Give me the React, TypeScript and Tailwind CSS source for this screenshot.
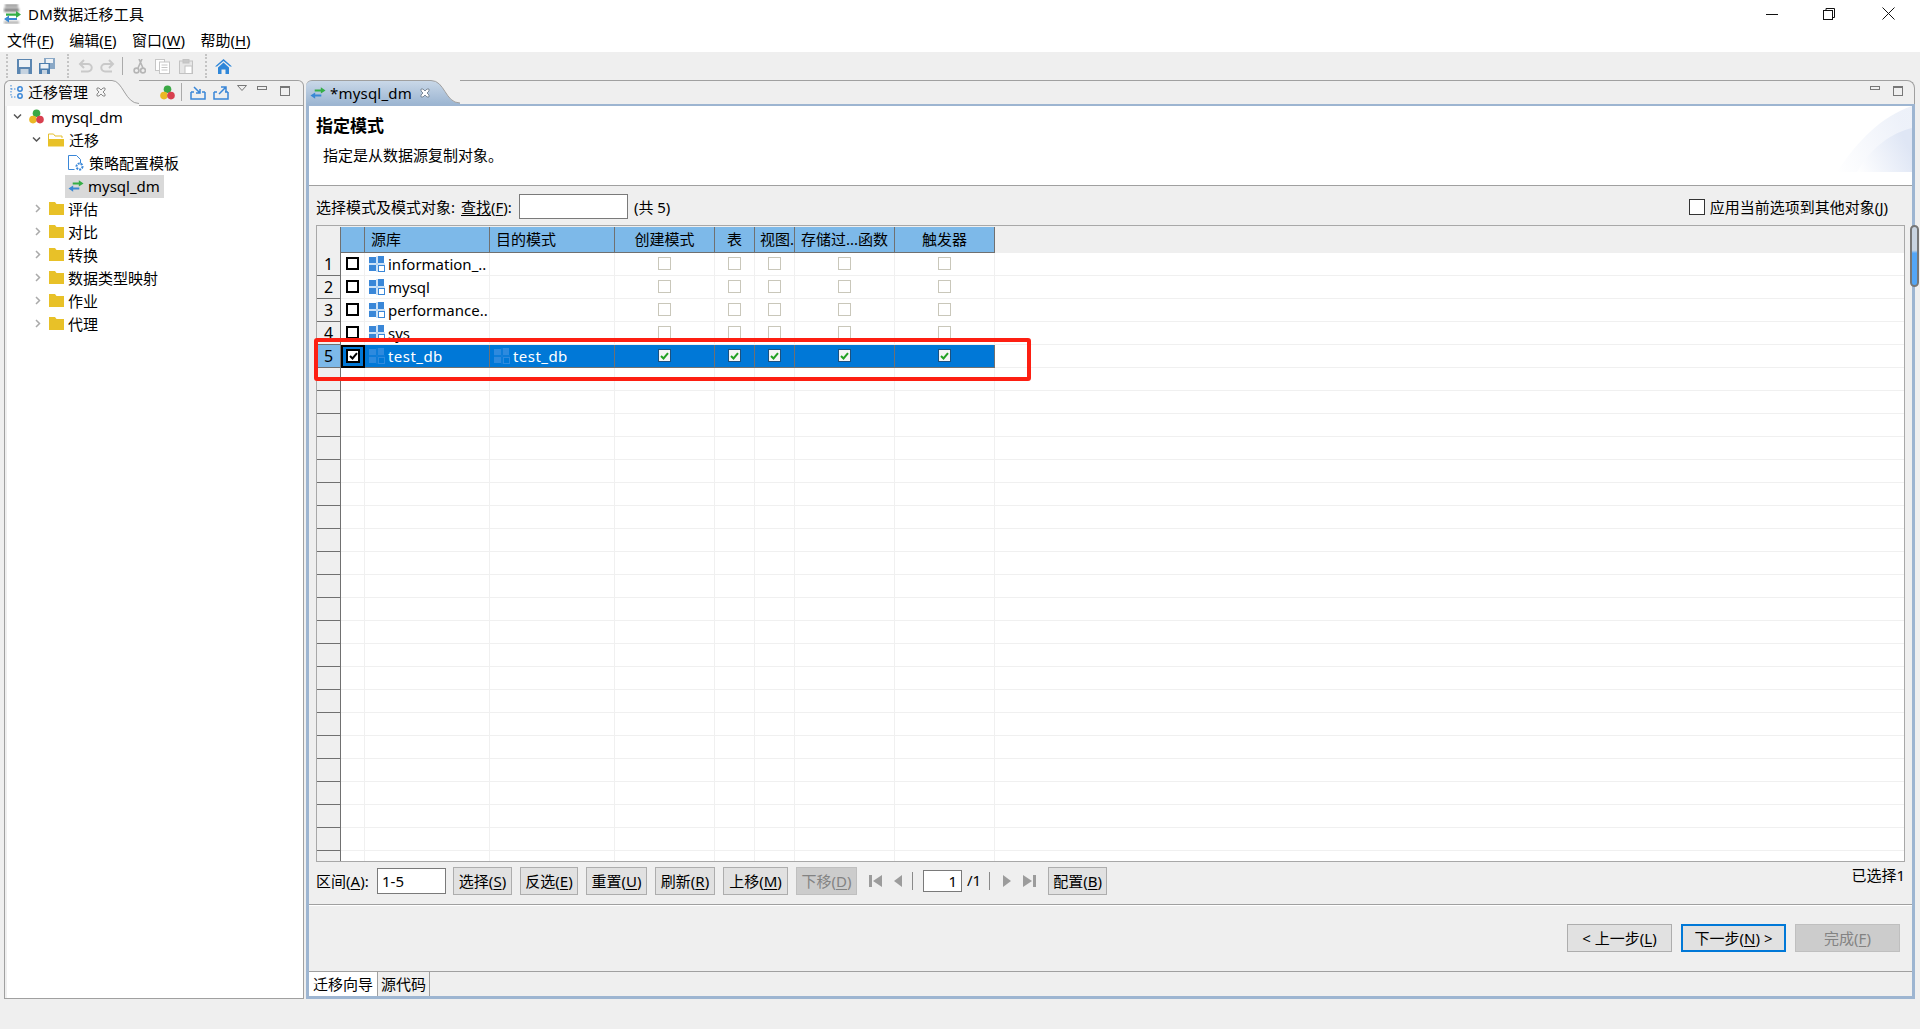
import type { ReactNode } from "react";

const rowCols = [
  "w-[24px]",
  "w-[125px]",
  "w-[125px]",
  "w-[100px]",
  "w-[40px]",
  "w-[40px]",
  "w-[100px]",
  "w-[100px]",
];

const headers = ["", "源库", "目的模式", "创建模式", "表", "视图.", "存储过...函数", "触发器"];
const schemas = ["information_..", "mysql", "performance..", "sys", "test_db"];

function Swap({ className = "" }: { className?: string }) {
  return (
    <svg viewBox="0 0 17 12" className={className}>
      <path d="M5 2.2h6.5V0l5 3.3-5 3.2V4.4H5z" fill="#35ae47" />
      <path d="M12 7.6H5.5V5.5l-5 3.2 5 3.3V9.8H12z" fill="#3a88d4" />
    </svg>
  );
}

function TriColor({ className = "" }: { className?: string }) {
  return (
    <svg viewBox="0 0 15 15" className={className}>
      <circle cx="7.5" cy="4.2" r="3.8" fill="#3aa845" />
      <circle cx="4" cy="10.6" r="3.8" fill="#eab825" />
      <circle cx="11" cy="10.6" r="3.8" fill="#d8404f" />
    </svg>
  );
}

function Folder({ open = false }: { open?: boolean }) {
  if (open) {
    return (
      <svg viewBox="0 0 16 14" className="h-[14px] w-[16px] shrink-0">
        <path d="M.5 13V1h5l1.5 2h7v2" fill="#fff" stroke="#e5bf2e" />
        <path d="M0 13.5V6h16v7.5z" fill="#e8c128" />
      </svg>
    );
  }
  return (
    <svg viewBox="0 0 15 13" className="h-[13px] w-[15px] shrink-0">
      <path d="M0 0h6l1.5 2H15v11H0z" fill="#e8c128" />
    </svg>
  );
}

function Chevron({ open }: { open: boolean }) {
  return (
    <svg viewBox="0 0 9 9" className="h-[9px] w-[9px] shrink-0" fill="none" strokeWidth="1.5">
      {open ? <path d="M1 2.5l3.5 3.5L8 2.5" stroke="#555" /> : <path d="M3 1l3.5 3.5L3 8" stroke="#aaa" />}
    </svg>
  );
}

function SchemaIcon({ faded = false }: { faded?: boolean }) {
  const c = faded ? "#2e8ade" : "#3a87d8";
  const line = faded ? "#1a80da" : "#9cc6ef";
  return (
    <svg viewBox="0 0 16 16" className="h-[16px] w-[16px] shrink-0">
      <rect x="0" y="1" width="7" height="6" fill={c} />
      <rect x="9" y="0" width="6" height="7" fill={c} />
      <rect x="0" y="9" width="7" height="6" fill={c} />
      <rect x="9.5" y="9.5" width="6" height="6" fill="none" stroke={c} />
      <path d="M8 0v16M0 8h16" stroke={line} />
    </svg>
  );
}

function DisabledBox() {
  return <div className="h-[13px] w-[13px] border border-[#c9c7ba] bg-white" />;
}

function CheckedBox() {
  return (
    <div className="flex h-[13px] w-[13px] items-center justify-center border border-[#1c5180] bg-[#f4f4f4]">
      <svg viewBox="0 0 9 8" className="h-[8px] w-[9px]">
        <path d="M1 4l2.5 2.5L8 1.2" fill="none" stroke="#21a121" strokeWidth="2" />
      </svg>
    </div>
  );
}

function Key({ text, k, after = "" }: { text: string; k: string; after?: string }) {
  return (
    <span>
      {text}(<span className="underline underline-offset-2">{k}</span>){after}
    </span>
  );
}

function Btn({ className = "", children, disabled = false }: { className?: string; children: ReactNode; disabled?: boolean }) {
  return (
    <div
      className={
        "flex h-[28px] shrink-0 items-center justify-center border " +
        (disabled ? "border-[#bfbfbf] bg-[#cccccc] text-[#838383] " : "border-[#adadad] bg-[#e1e1e1] ") +
        className
      }
    >
      {children}
    </div>
  );
}

function Grip() {
  return <div className="h-[24px] w-[2px] shrink-0 border-l-2 border-dotted border-[#c4c4c4]" />;
}

function ToolbarRow() {
  return (
    <div className="flex h-[28px] items-center pl-[6px]">
      <Grip />
      <svg viewBox="0 0 15 15" className="ml-[9px] h-[15px] w-[15px]">
        <rect width="15" height="15" fill="#5b86b1" />
        <rect x="2" y="1" width="11" height="7" fill="#eef2f6" />
        <rect x="3.5" y="10" width="8" height="5" fill="#c6d3e0" />
      </svg>
      <svg viewBox="0 0 16 16" className="ml-[7px] h-[16px] w-[16px]">
        <rect x="5" width="11" height="11" fill="#8aa8c6" />
        <rect x="7" y="1" width="7" height="4" fill="#eef2f6" />
        <rect y="5" width="11" height="11" fill="#4f7fae" />
        <rect x="1.5" y="6" width="8" height="4.5" fill="#eef2f6" />
        <rect x="3" y="12" width="5" height="4" fill="#c6d3e0" />
      </svg>
      <div className="ml-[12px]"><Grip /></div>
      <svg viewBox="0 0 15 14" className="ml-[9px] h-[14px] w-[15px]" fill="none" stroke="#c9c9c9" strokeWidth="2">
        <path d="M6 1L2 5l4 4M2 5h8a3.5 3.5 0 0 1 0 7.5H3" />
      </svg>
      <svg viewBox="0 0 15 14" className="ml-[7px] h-[14px] w-[15px]" fill="none" stroke="#c9c9c9" strokeWidth="2">
        <path d="M9 1l4 4-4 4M13 5H5a3.5 3.5 0 0 0 0 7.5h7" />
      </svg>
      <div className="ml-[7px] h-[18px] w-px bg-[#aaaaaa]" />
      <svg viewBox="0 0 13 15" className="ml-[10px] h-[15px] w-[13px]" fill="none" stroke="#b5b5b5" strokeWidth="1.6">
        <path d="M9 0L5 9M6 0l4 9" />
        <circle cx="3.5" cy="11.5" r="2.4" />
        <circle cx="10" cy="11.5" r="2.4" />
      </svg>
      <svg viewBox="0 0 15 15" className="ml-[9px] h-[15px] w-[15px]" fill="#fff" stroke="#c6c6c6">
        <rect x=".5" y=".5" width="9" height="11" />
        <rect x="4.5" y="3" width="10" height="11.5" />
        <path d="M6.5 6h6M6.5 8.5h6M6.5 11h6" />
      </svg>
      <svg viewBox="0 0 14 15" className="ml-[9px] h-[15px] w-[14px]" fill="#e6e6e6" stroke="#c2c2c2">
        <rect x=".5" y="2" width="13" height="12.5" />
        <rect x="4" y=".5" width="6" height="3.5" fill="#c8c8c8" />
        <rect x="6" y="7" width="7" height="7.5" fill="#fff" />
      </svg>
      <div className="ml-[12px]"><Grip /></div>
      <svg viewBox="0 0 17 15" className="ml-[8px] h-[15px] w-[17px]" fill="#2f87d9">
        <path d="M8.5 0L17 7.5h-2L8.5 2 2 7.5H0z" />
        <path d="M3 8.5l5.5-5 5.5 5V15h-3.5v-4.5h-4V15H3z" />
      </svg>
    </div>
  );
}

function TreeRow({ pad, chevron, icon, children, gap, selected = false }: { pad: string; chevron?: ReactNode; icon: ReactNode; children: ReactNode; gap: string; selected?: boolean }) {
  return (
    <div className={"flex h-[23px] items-center " + pad}>
      {chevron}
      <div className={"flex h-[23px] items-center pb-[2px] " + gap + (selected ? " bg-[#d9d9d9] pl-[3px] pr-[4px]" : "")}>
        {icon}
        <span>{children}</span>
      </div>
    </div>
  );
}

function Tree() {
  const closed = ["评估", "对比", "转换", "数据类型映射", "作业", "代理"];
  return (
    <div className="flex-1 bg-white">
      <TreeRow pad="pl-[6px]" gap="gap-[7px]" chevron={<div className="mr-[7px] pb-[2px]"><Chevron open /></div>} icon={<TriColor className="h-[15px] w-[15px] shrink-0" />}>
        mysql_dm
      </TreeRow>
      <TreeRow pad="pl-[25px]" gap="gap-[5px]" chevron={<div className="mr-[7px] pb-[2px]"><Chevron open /></div>} icon={<Folder open />}>
        迁移
      </TreeRow>
      <TreeRow
        pad="pl-[61px]"
        gap="gap-[5px]"
        icon={
          <svg viewBox="0 0 16 16" className="h-[16px] w-[16px] shrink-0">
            <path d="M.5.5h8l4 4v4M.5.5v14h6" fill="none" stroke="#3a87d8" />
            <circle cx="11.5" cy="11.5" r="3" fill="none" stroke="#3a87d8" strokeWidth="2" strokeDasharray="2 1" />
          </svg>
        }
      >
        策略配置模板
      </TreeRow>
      <TreeRow pad="pl-[58px]" gap="gap-[4px]" selected icon={<Swap className="h-[12px] w-[16px] shrink-0" />}>
        mysql_dm
      </TreeRow>
      {closed.map((t) => (
        <TreeRow key={t} pad="pl-[26px]" gap="gap-[4px]" chevron={<div className="mr-[7px] pb-[2px]"><Chevron open={false} /></div>} icon={<Folder />}>
          {t}
        </TreeRow>
      ))}
    </div>
  );
}

function MinMax() {
  return (
    <>
      <div className="h-[4px] w-[10px] border border-[#777]" />
      <div className="ml-[13px] h-[10px] w-[10px] border border-t-2 border-[#777]" />
    </>
  );
}

function LeftPanel() {
  return (
    <div className="flex h-full w-[300px] shrink-0 flex-col">
      <div className="flex h-[26px] shrink-0">
        <div className="flex w-[105px] items-center rounded-tl-md border-l border-t border-[#a0a0a0] bg-[#f4f4f4] pb-[3px] pl-[5px]">
          <svg viewBox="0 0 14 14" className="h-[14px] w-[14px] shrink-0" fill="none" stroke="#3a87d8">
            <path d="M1 0v12h6M1 4h6" strokeDasharray="1.5 1.5" />
            <circle cx="10" cy="4" r="2.2" strokeWidth="1.5" />
            <circle cx="10" cy="11" r="2.2" strokeWidth="1.5" />
          </svg>
          <span className="ml-[4px]">迁移管理</span>
          <svg viewBox="0 0 10 10" className="ml-[8px] h-[10px] w-[10px]" fill="none" stroke="#8a8a8a">
            <path d="M1 1h2l2 2 2-2h2v2L7 5l2 2v2H7L5 7 3 9H1V7l2-2-2-2z" />
          </svg>
        </div>
        <svg viewBox="0 0 30 26" className="h-[26px] w-[30px] shrink-0">
          <path d="M0 0h3C14 0 16 24 30 24v2H0z" fill="#f4f4f4" />
          <path d="M0 .5h3C14 .5 16 23.5 30 23.5" fill="none" stroke="#a0a0a0" />
        </svg>
        <div className="flex flex-1 rounded-tr-md border-b border-r border-t border-[#a0a0a0] pb-px">
          <TriColor className="ml-[21px] mt-[4px] h-[15px] w-[15px]" />
          <div className="ml-[6px] mt-[2px] h-[18px] w-px bg-[#aaa]" />
          <svg viewBox="0 0 16 14" className="ml-[8px] mt-[5px] h-[14px] w-[16px]" fill="none" stroke="#3a87d8" strokeWidth="1.5">
            <path d="M1 6v7h14V6M1 6h3M15 6h-3M4 1l6 6M10 3v4H6" />
          </svg>
          <svg viewBox="0 0 16 14" className="ml-[7px] mt-[5px] h-[14px] w-[16px]" fill="none" stroke="#3a87d8" strokeWidth="1.5">
            <path d="M1 6v7h14V6M1 6h3M15 6h-3M6 8l7-7M8 1h5v5" />
          </svg>
          <svg viewBox="0 0 10 6" className="ml-[8px] mt-[4px] h-[6px] w-[10px]" fill="none" stroke="#777">
            <path d="M.5.5h9L5 5.5z" />
          </svg>
          <div className="ml-[10px] mt-[5px] flex items-start">
            <MinMax />
          </div>
        </div>
      </div>
      <div className="flex flex-1 border-b border-l border-r border-[#a0a0a0] pl-[2px]">
        <Tree />
      </div>
    </div>
  );
}

function SchemaRow({ i, name }: { i: number; name: string }) {
  const selected = i === 4;
  const textCls = selected ? "-mt-[2px] tracking-[0.45px]" : "-mt-[2px]";
  return (
    <div className="flex h-[23px] shrink-0">
      <div
        className={
          "flex w-[24px] shrink-0 items-center justify-center border-b border-r border-[#707070] text-[16px] " +
          (selected ? "bg-[#7db9e9]" : "bg-[#efefef]")
        }
      >
        {i + 1}
      </div>
      <div
        className={
          "flex w-[24px] shrink-0 items-start justify-center " +
          (selected ? "border-2 border-black bg-[#0078d7] pt-[2px]" : "border-b border-r border-[#f0f0f0] pt-[4px]")
        }
      >
        {selected ? (
          <div className="flex h-[14px] w-[14px] items-center justify-center border-2 border-black bg-white">
            <svg viewBox="0 0 9 8" className="h-[8px] w-[9px]">
              <path d="M1 4l2.5 2.5L8 1.2" fill="none" stroke="#000" strokeWidth="2" />
            </svg>
          </div>
        ) : (
          <div className="h-[13px] w-[13px] border-2 border-black bg-white" />
        )}
      </div>
      <div className={"flex w-[125px] shrink-0 items-start gap-[3px] overflow-hidden whitespace-nowrap pl-[4px] pt-[3px] " + (selected ? "border-b border-r border-[#707070] bg-[#0078d7] text-white" : "border-b border-r border-[#f0f0f0]")}>
        <SchemaIcon faded={selected} />
        <span className={textCls}>{name}</span>
      </div>
      <div className={"flex w-[125px] shrink-0 items-start gap-[3px] overflow-hidden whitespace-nowrap pl-[4px] pt-[3px] " + (selected ? "border-b border-r border-[#707070] bg-[#0078d7] text-white" : "border-b border-r border-[#f0f0f0]")}>
        {selected && (
          <>
            <SchemaIcon faded />
            <span className={textCls}>{name}</span>
          </>
        )}
      </div>
      {rowCols.slice(3).map((c, j) => (
        <div
          key={j}
          className={"flex shrink-0 items-start justify-center pt-[4px] " + c + (selected ? " border-b border-r border-[#707070] bg-[#0078d7]" : " border-b border-r border-[#f0f0f0]")}
        >
          {selected ? <CheckedBox /> : <DisabledBox />}
        </div>
      ))}
      <div className="flex-1 border-b border-[#f0f0f0]" />
    </div>
  );
}

function EmptyRow() {
  return (
    <div className="flex h-[23px] shrink-0">
      <div className="w-[24px] shrink-0 border-b border-r border-[#707070] bg-[#efefef]" />
      {rowCols.map((c, j) => (
        <div key={j} className={"shrink-0 border-b border-r border-[#f0f0f0] " + c} />
      ))}
      <div className="flex-1 border-b border-[#f0f0f0]" />
    </div>
  );
}

function SchemaTable() {
  return (
    <div className="mx-[7px] flex h-[637px] shrink-0 flex-col overflow-hidden border border-[#a8a8a8] bg-white">
      <div className="flex h-[27px] shrink-0 bg-[#efefef]">
        <div className="w-[24px] shrink-0 pt-px">
          <div className="h-[26px] border-r border-[#707070]" />
        </div>
        {rowCols.map((c, j) => (
          <div
            key={j}
            className={
              "mt-px flex shrink-0 items-center overflow-hidden whitespace-nowrap border-b border-r border-[#707070] bg-[#7db9e9] pb-[2px] " +
              c +
              (j === 1 || j === 2 ? " pl-[6px]" : j === 5 ? " pl-[5px]" : " justify-center")
            }
          >
            {headers[j]}
          </div>
        ))}
      </div>
      {schemas.map((s, i) => (
        <SchemaRow key={s} i={i} name={s} />
      ))}
      {Array.from({ length: 23 }).map((_, i) => (
        <EmptyRow key={i} />
      ))}
    </div>
  );
}

function PageBar() {
  return (
    <div className="flex h-[42px] shrink-0 items-start pl-[7px] pr-[7px] pt-[5px]">
      <div className="flex h-[28px] w-[61px] shrink-0 items-center">
        <Key text="区间" k="A" after=":" />
      </div>
      <div className="mt-px flex h-[26px] w-[69px] shrink-0 items-center border border-[#7a7a7a] bg-white pl-[4px]">1-5</div>
      <Btn className="ml-[7px] w-[59px]"><Key text="选择" k="S" /></Btn>
      <Btn className="ml-[8px] w-[58px]"><Key text="反选" k="E" /></Btn>
      <Btn className="ml-[8px] w-[61px]"><Key text="重置" k="U" /></Btn>
      <Btn className="ml-[8px] w-[60px]"><Key text="刷新" k="R" /></Btn>
      <Btn className="ml-[8px] w-[65px]"><Key text="上移" k="M" /></Btn>
      <Btn disabled className="ml-[8px] w-[61px]"><Key text="下移" k="D" /></Btn>
      <svg viewBox="0 0 13 12" className="ml-[12px] mt-[8px] h-[12px] w-[13px]" fill="#9c9c9c">
        <rect width="3" height="12" />
        <path d="M13 0v12L4 6z" />
      </svg>
      <svg viewBox="0 0 8 12" className="ml-[12px] mt-[8px] h-[12px] w-[8px]" fill="#9c9c9c">
        <path d="M8 0v12L0 6z" />
      </svg>
      <div className="ml-[10px] mt-[5px] h-[18px] w-px bg-[#8a8a8a]" />
      <div className="ml-[10px] mt-[3px] flex h-[22px] w-[39px] items-center justify-end border border-[#7a7a7a] bg-white pr-[4px]">1</div>
      <span className="ml-[5px] mt-[3px]">/1</span>
      <div className="ml-[8px] mt-[5px] h-[18px] w-px bg-[#8a8a8a]" />
      <svg viewBox="0 0 8 12" className="ml-[13px] mt-[8px] h-[12px] w-[8px]" fill="#9c9c9c">
        <path d="M0 0v12l8-6z" />
      </svg>
      <svg viewBox="0 0 13 12" className="ml-[12px] mt-[8px] h-[12px] w-[13px]" fill="#9c9c9c">
        <rect x="10" width="3" height="12" />
        <path d="M0 0v12l9-6z" />
      </svg>
      <Btn className="ml-[12px] w-[59px]"><Key text="配置" k="B" /></Btn>
      <span className="-mt-[2px] ml-auto">已选择1</span>
    </div>
  );
}

function RightPanel() {
  return (
    <div className="flex h-full w-[1609px] shrink-0 flex-col">
      <div className="flex h-[24px] shrink-0">
        <div className="flex w-[124px] items-center rounded-tl-md border-t border-[#a0a0a0] bg-gradient-to-b from-[#c9d8e8] to-[#9db6d2] pl-[4px]">
          <Swap className="h-[12px] w-[16px] shrink-0" />
          <span className="ml-[4px] tracking-[0.2px]">*mysql_dm</span>
          <svg viewBox="0 0 10 10" className="ml-[8px] h-[10px] w-[10px] shrink-0" fill="#fff" stroke="#7d8a99">
            <path d="M1 1h2l2 2 2-2h2v2L7 5l2 2v2H7L5 7 3 9H1V7l2-2-2-2z" />
          </svg>
        </div>
        <svg viewBox="0 0 30 24" className="h-[24px] w-[30px] shrink-0" preserveAspectRatio="none">
          <defs>
            <linearGradient id="tabFill" x1="0" y1="0" x2="0" y2="1">
              <stop offset="0" stopColor="#c9d8e8" />
              <stop offset="1" stopColor="#9db6d2" />
            </linearGradient>
          </defs>
          <path d="M0 .5h1C15 .5 15 23 30 23v1H0z" fill="url(#tabFill)" />
          <path d="M0 .5h1C15 .5 15 23 30 23" fill="none" stroke="#a0a0a0" />
        </svg>
        <div className="flex flex-1 items-start justify-end rounded-tr-lg border-r border-t border-[#a0a0a0] pr-[11px] pt-[5px]">
          <MinMax />
        </div>
      </div>
      <div className="flex min-h-0 flex-1 flex-col border-[3px] border-t-2 border-[#9db5d1]">
        <div className="flex h-[80px] shrink-0 justify-between border-b border-[#a0a0a0] bg-white">
          <div className="pl-[7px] pt-[8px]">
            <div className="text-[17px] font-bold leading-[24px]">指定模式</div>
            <div className="pl-[7px] pt-[7px]">指定是从数据源复制对象。</div>
          </div>
          <svg viewBox="0 0 75 66" className="h-[66px] w-[75px]">
            <defs>
              <linearGradient id="corner" x1="0" y1="1" x2="1" y2="0.6">
                <stop offset="0" stopColor="#ffffff" />
                <stop offset="1" stopColor="#dfe6f5" />
              </linearGradient>
            </defs>
            <path d="M0 66C20 35 45 10 75 0v66z" fill="url(#corner)" opacity=".55" />
            <path d="M20 66C35 40 55 27 75 22v44z" fill="url(#corner)" />
          </svg>
        </div>
        <div className="flex h-[39px] shrink-0 items-start bg-[#efefef] pl-[7px] pr-[24px] pt-[8px]">
          <div className="flex h-[25px] items-center">选择模式及模式对象:</div>
          <div className="ml-[6px] flex h-[25px] items-center">
            <span><span className="underline underline-offset-2">查找</span>(<span className="underline underline-offset-2">F</span>):</span>
          </div>
          <div className="ml-[7px] h-[25px] w-[109px] border border-[#7a7a7a] bg-white" />
          <div className="ml-[6px] flex h-[25px] items-center">(共 5)</div>
          <div className="ml-auto flex h-[25px] items-center gap-[5px]">
            <div className="h-[16px] w-[16px] border border-[#333] bg-white" />
            <Key text="应用当前选项到其他对象" k="J" />
          </div>
        </div>
        <SchemaTable />
        <PageBar />
        <div className="flex flex-1 justify-end gap-[9px] border-b border-t border-b-[#a0a0a0] border-t-[#a0a0a0] pr-[12px] pt-[19px] shadow-[inset_0_1px_0_#ffffff]">
          <Btn className="w-[105px]"><Key text="< 上一步" k="L" /></Btn>
          <div className="flex h-[28px] w-[105px] items-center justify-center border-2 border-[#0078d7] bg-[#e1e1e1]">
            <Key text="下一步" k="N" after=" >" />
          </div>
          <Btn disabled className="w-[105px]"><Key text="完成" k="F" /></Btn>
        </div>
        <div className="flex h-[24px] shrink-0">
          <div className="flex w-[68px] items-center justify-center bg-white pb-px">迁移向导</div>
          <div className="flex w-[53px] items-center justify-center border-l border-r border-[#a0a0a0] pb-px">源代码</div>
        </div>
      </div>
    </div>
  );
}

export default function App() {
  return (
    <div className="relative flex h-[1029px] w-[1920px] flex-col overflow-hidden bg-[#efefef] text-[15px] leading-[20px] text-black [font-family:'Noto_Sans','Noto_Sans_CJK_SC',sans-serif]">
      <div className="flex h-[27px] shrink-0 items-center bg-white pl-[3px]">
        <svg viewBox="0 0 18 20" className="h-[20px] w-[18px]">
          <g className="blur-[0.8px]">
            <rect x="2" y="0" width="13" height="3" fill="#9a9a9a" />
            <rect x="1" y="4" width="15" height="4" fill="#8a8a8a" />
            <rect x="1" y="17" width="15" height="3" fill="#b5b5b5" />
          </g>
          <path d="M3 9.5h10V7l5 3.5-5 3.5v-2.3H3z" fill="#35ae47" />
          <path d="M14 16H6v2.5l-5-3.5 5-3.5V14h8z" fill="#3a88d4" />
        </svg>
        <span className="ml-[7px] tracking-[0.2px]">DM数据迁移工具</span>
        <div className="ml-auto flex items-center pr-[25px]">
          <svg viewBox="0 0 12 12" className="h-[12px] w-[12px]" stroke="#111"><path d="M0 6.5h12" /></svg>
          <svg viewBox="0 0 12 12" className="ml-[45px] h-[12px] w-[12px]" fill="none" stroke="#111">
            <rect x=".5" y="2.5" width="9" height="9" />
            <path d="M3 2.5V.5h8.5v9H9.5" />
          </svg>
          <svg viewBox="0 0 13 13" className="ml-[47px] h-[13px] w-[13px]" stroke="#111"><path d="M.5.5l12 12M12.5.5l-12 12" /></svg>
        </div>
      </div>
      <div className="flex h-[25px] shrink-0 items-center gap-[15.4px] bg-white pl-[7px]">
        <Key text="文件" k="F" />
        <Key text="编辑" k="E" />
        <Key text="窗口" k="W" />
        <Key text="帮助" k="H" />
      </div>
      <ToolbarRow />
      <div className="flex h-[919px] shrink-0 gap-[2px] pl-[4px]">
        <LeftPanel />
        <RightPanel />
      </div>
      {/* 红框标注 */}
      <div className="absolute left-[314px] top-[338px] h-[43px] w-[717px] rounded-[3px] border-4 border-[#fd1f12]" />
      {/* scrollbar thumb */}
      <div className="absolute left-[1910px] top-[225px] h-[62px] w-[9px] rounded-full border-2 border-[#777] bg-gradient-to-b from-[#c9d4e1] from-40% to-[#53a6f7] to-45%" />
    </div>
  );
}
